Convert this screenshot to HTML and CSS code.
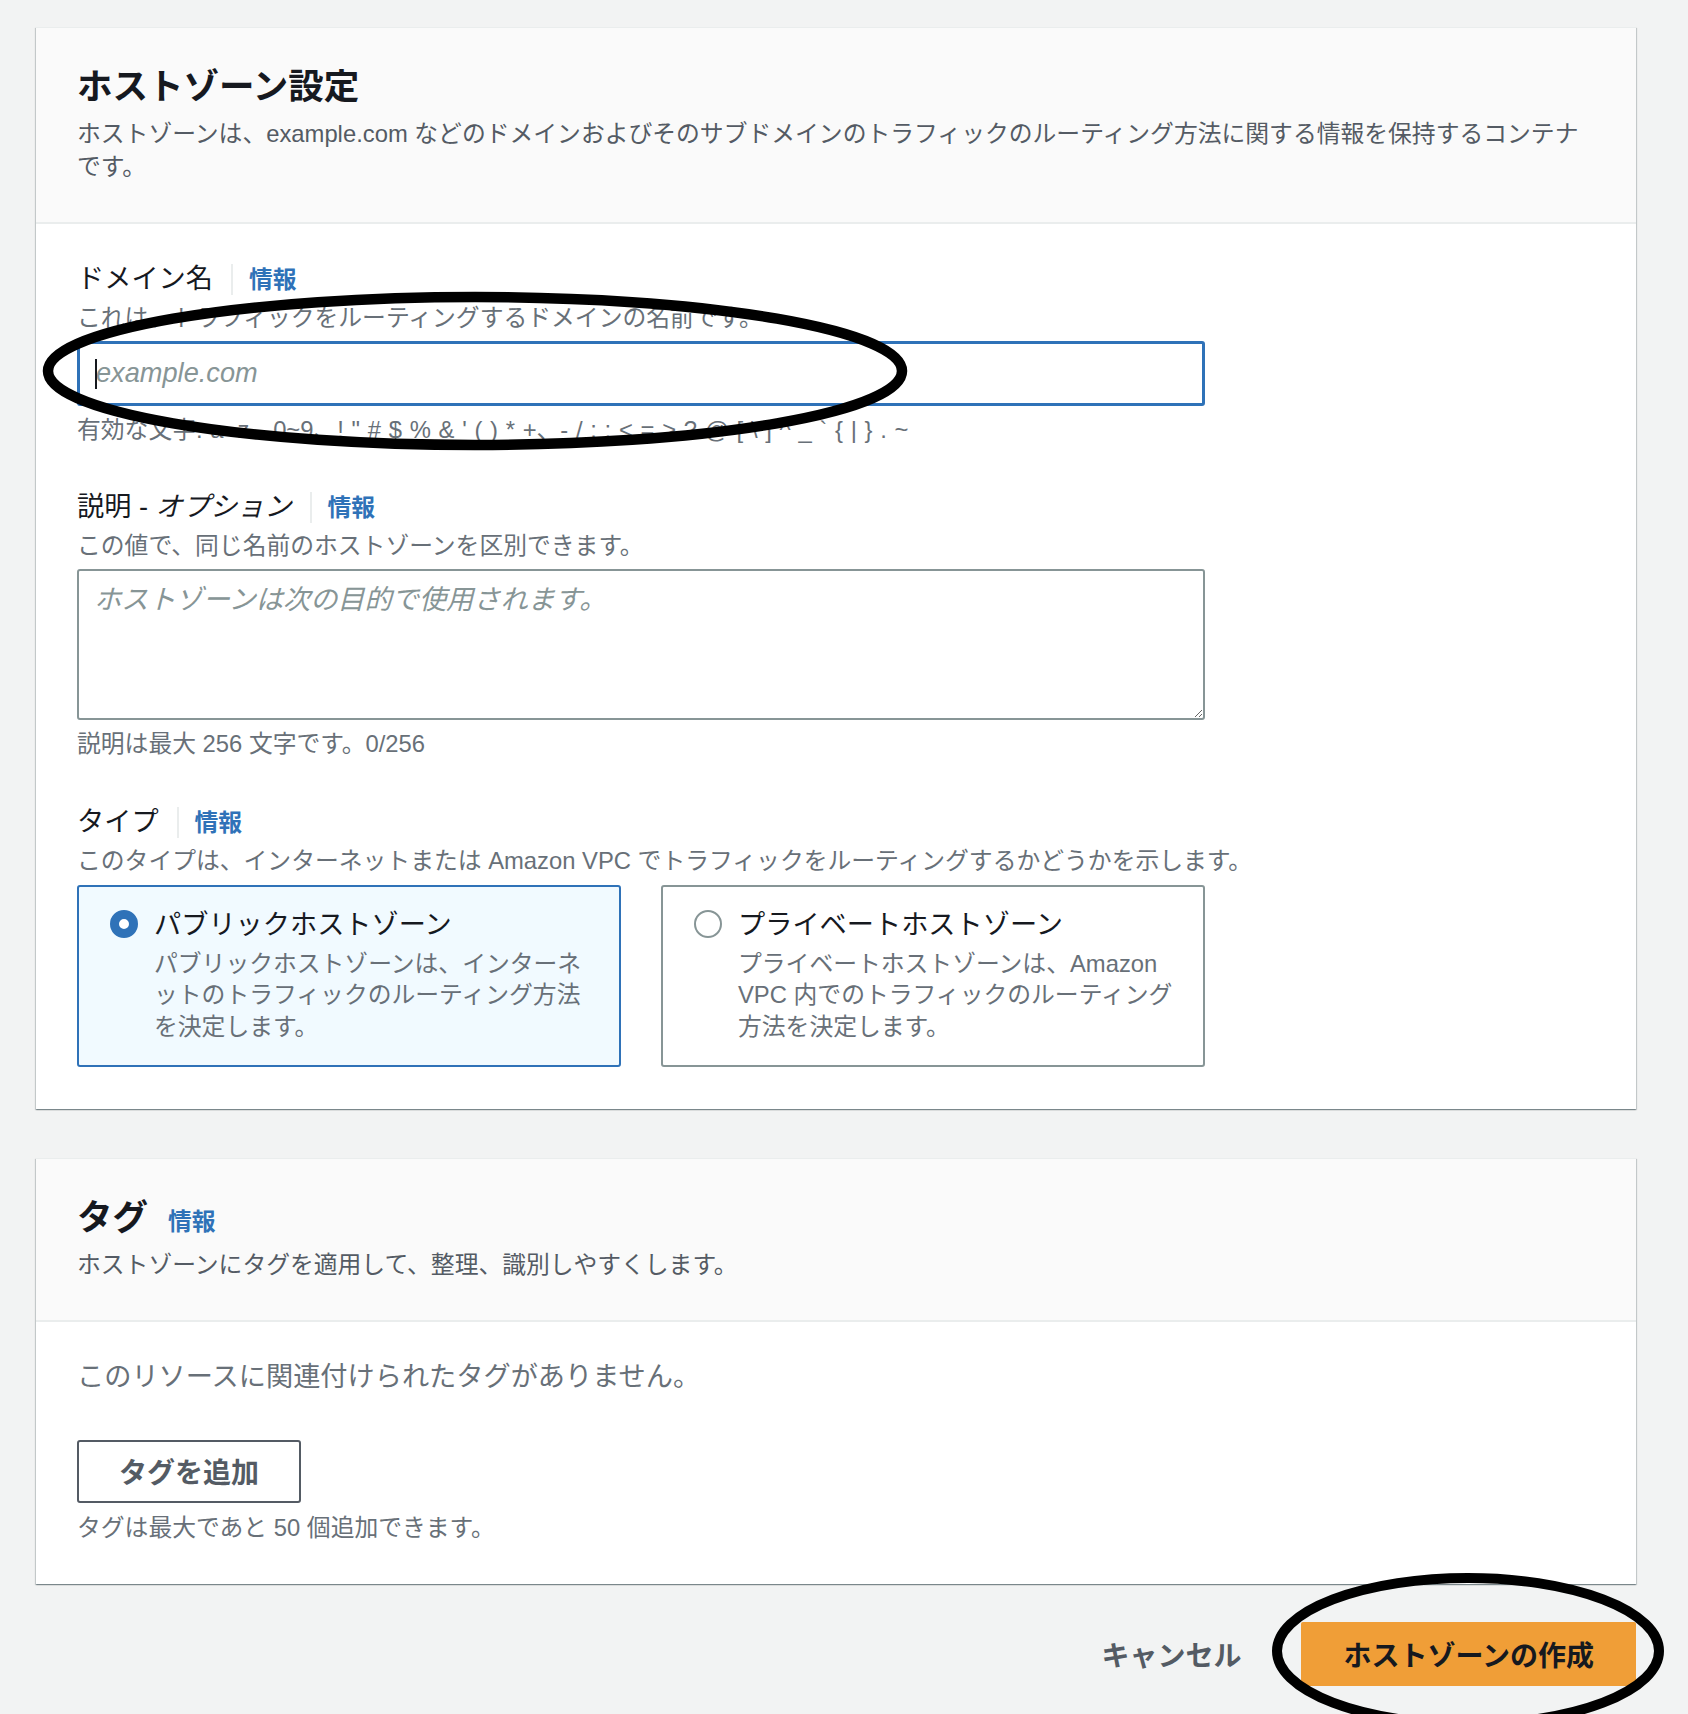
FILE: index.html
```html
<!DOCTYPE html>
<html lang="ja">
<head>
<meta charset="utf-8">
<title>ホストゾーン設定</title>
<link rel="stylesheet" href="styles.css">
</head>
<body>
<main class="page">
  <section class="card">
    <header class="card-header">
      <h2 class="card-title">ホストゾーン設定</h2>
      <p class="card-desc">ホストゾーンは、example.com などのドメインおよびそのサブドメインのトラフィックのルーティング方法に関する情報を保持するコンテナです。</p>
    </header>
    <div class="card-body">
      <div class="field">
        <div class="label-row"><label class="label" for="domain">ドメイン名</label><a class="info">情報</a></div>
        <div class="hint">これは、トラフィックをルーティングするドメインの名前です。</div>
        <div class="control input-wrap">
          <input id="domain" class="input" type="text" placeholder="example.com">
          <span class="caret"></span>
        </div>
        <div class="constraint chars">有効な文字: a~z、0~9、! " # $ % &amp; ' ( ) * +、- / : ; &lt; = &gt; ? @ [ \ ] ^ _ ` { | } . ~</div>
      </div>
      <div class="field">
        <div class="label-row"><label class="label" for="desc">説明 - <i class="opt">オプション</i></label><a class="info">情報</a></div>
        <div class="hint">この値で、同じ名前のホストゾーンを区別できます。</div>
        <div class="control">
          <textarea id="desc" class="textarea" placeholder="ホストゾーンは次の目的で使用されます。"></textarea>
        </div>
        <div class="constraint">説明は最大 256 文字です。0/256</div>
      </div>
      <div class="field">
        <div class="label-row"><span class="label">タイプ</span><a class="info">情報</a></div>
        <div class="hint">このタイプは、インターネットまたは Amazon VPC でトラフィックをルーティングするかどうかを示します。</div>
        <div class="control tiles">
          <div class="tile selected">
            <span class="radio checked"></span>
            <div class="tile-text">
              <div class="tile-title">パブリックホストゾーン</div>
              <div class="tile-desc">
                <span class="line">パブリックホストゾーンは、インターネ</span>
                <span class="line">ットのトラフィックのルーティング方法</span>
                <span class="line">を決定します。</span>
              </div>
            </div>
          </div>
          <div class="tile">
            <span class="radio"></span>
            <div class="tile-text">
              <div class="tile-title">プライベートホストゾーン</div>
              <div class="tile-desc">
                <span class="line">プライベートホストゾーンは、Amazon</span>
                <span class="line">VPC 内でのトラフィックのルーティング</span>
                <span class="line">方法を決定します。</span>
              </div>
            </div>
          </div>
        </div>
      </div>
    </div>
  </section>

  <section class="card card-tags">
    <header class="card-header">
      <h2 class="card-title">タグ<a class="info title-info">情報</a></h2>
      <p class="card-desc">ホストゾーンにタグを適用して、整理、識別しやすくします。</p>
    </header>
    <div class="card-body tags-body">
      <div class="empty">このリソースに関連付けられたタグがありません。</div>
      <button class="btn-normal" type="button">タグを追加</button>
      <div class="constraint">タグは最大であと 50 個追加できます。</div>
    </div>
  </section>

  <div class="footer">
    <button class="btn-link" type="button">キャンセル</button>
    <button class="btn-primary" type="button">ホストゾーンの作成</button>
  </div>
</main>

<svg class="marks" width="1688" height="1714" viewBox="0 0 1688 1714" aria-hidden="true">
  <ellipse cx="475" cy="371" rx="427" ry="74" fill="none" stroke="#000" stroke-width="10.5"/>
  <ellipse cx="1468" cy="1651" rx="191" ry="73" fill="none" stroke="#000" stroke-width="10"/>
</svg>
</body>
</html>
```

FILE: styles.css
```css
* { box-sizing: border-box; }
html, body { margin: 0; padding: 0; }
body {
  position: relative;
  width: 1688px;
  height: 1714px;
  overflow: hidden;
  background: #f2f3f3;
  font-family: "Liberation Sans", "Noto Sans CJK JP", sans-serif;
  font-size: 23.8px;
  color: #16191f;
}
.page {
  padding: 27px 52px 0 36px;
}
.card {
  background: #fff;
  border-top: 1px solid #eaeded;
  box-shadow: 0 1px 1px 0 rgba(0, 28, 36, 0.3), 1px 1px 1px 0 rgba(0, 28, 36, 0.15), -1px 1px 1px 0 rgba(0, 28, 36, 0.15);
}
.card + .card { margin-top: 49px; }
.card-header {
  background: #fafafa;
  border-bottom: 2px solid #eaeded;
  padding: 38px 41px 38.5px;
}
.card-title {
  margin: 0;
  font-size: 35.5px;
  line-height: 43px;
  font-weight: 700;
  display: flex;
  align-items: baseline;
}
.card-desc {
  margin: 8px 0 0;
  line-height: 33px;
  color: #545b64;
}
.card-body {
  padding: 36px 41px 42px;
}
.field + .field { margin-top: 41.5px; }
.label-row {
  display: flex;
  align-items: baseline;
}
.label {
  font-size: 27.2px;
  line-height: 37px;
  color: #16191f;
}
.opt { font-style: italic; }
.info {
  color: #2f72b8;
  font-weight: 700;
  font-size: 23.8px;
  line-height: 31px;
  margin-left: 18px;
  padding-left: 16px;
  border-left: 2px solid #eaeded;
  text-decoration: none;
  cursor: pointer;
}
.title-info {
  border-left: 0;
  padding-left: 0;
  margin-left: 20px;
}
.hint {
  margin-top: 4px;
  line-height: 34px;
  color: #687078;
}
.control {
  width: 1128px;
  margin-top: 6px;
}
.constraint {
  margin-top: 7px;
  line-height: 34px;
  color: #687078;
}
.chars { word-spacing: 1.1px; }
.input-wrap { position: relative; }
.input {
  display: block;
  width: 100%;
  height: 65px;
  border: 3px solid #2f72b8;
  border-radius: 3px;
  padding: 0 16px;
  font-family: inherit;
  font-size: 27.2px;
  color: #16191f;
  background: #fff;
  outline: none;
}
.input::placeholder,
.textarea::placeholder {
  color: #879596;
  font-style: italic;
}
.caret {
  position: absolute;
  left: 18px;
  top: 18px;
  width: 2px;
  height: 30px;
  background: #16191f;
}
.textarea {
  display: block;
  width: 100%;
  height: 151px;
  border: 2px solid #879596;
  border-radius: 3px;
  padding: 10px 15px;
  font-family: inherit;
  font-size: 27.2px;
  line-height: 38px;
  color: #16191f;
  background: #fff;
  resize: vertical;
  outline: none;
}
.tiles {
  display: grid;
  grid-template-columns: 1fr 1fr;
  column-gap: 40px;
  margin-top: 7px;
}
.tile {
  display: flex;
  align-items: flex-start;
  gap: 16px;
  border: 2px solid #879596;
  border-radius: 3px;
  background: #fff;
  padding: 19px 14px 23px 31px;
}
.tile.selected {
  border-color: #2f72b8;
  background: #f1faff;
}
.radio {
  flex: none;
  width: 28px;
  height: 28px;
  margin-top: 4.5px;
  border-radius: 50%;
  border: 2px solid #879596;
  background: #fff;
}
.radio.checked {
  border: 9px solid #2f72b8;
}
.tile-title {
  font-size: 27.2px;
  line-height: 37px;
  color: #16191f;
}
.tile-desc {
  margin-top: 5px;
  line-height: 31.5px;
  color: #687078;
}
.line {
  display: block;
  white-space: nowrap;
}
.tags-body {
  padding: 36.5px 41px 39px;
}
.empty {
  font-size: 27.2px;
  line-height: 38px;
  color: #687078;
}
.btn-normal {
  display: block;
  margin-top: 43.5px;
  height: 63px;
  padding: 0 40px;
  border: 2px solid #545b64;
  border-radius: 3px;
  background: #fff;
  color: #545b64;
  font-family: inherit;
  font-size: 28px;
  font-weight: 700;
}
.tags-body .constraint { margin-top: 8px; }
.footer {
  display: flex;
  justify-content: flex-end;
  gap: 26px;
  margin-top: 38.5px;
}
.btn-link,
.btn-primary {
  height: 64px;
  font-family: inherit;
  font-size: 28px;
  font-weight: 700;
  border: 0;
  border-radius: 2px;
}
.btn-link {
  padding: 0 34px;
  background: transparent;
  color: #545b64;
}
.btn-primary {
  padding: 0 42px;
  background: #f09e37;
  color: #16191f;
}
.marks {
  position: absolute;
  top: 0;
  left: 0;
  pointer-events: none;
}
```
